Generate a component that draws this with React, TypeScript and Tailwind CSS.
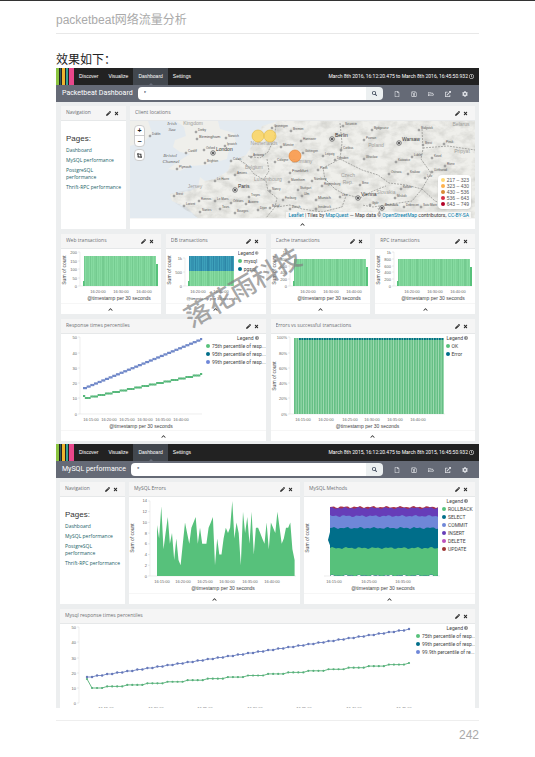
import type { ReactNode } from "react";
import {
  FaChevronUp,
  FaCog,
  FaCropAlt,
  FaExternalLinkAlt,
  FaPencilAlt,
  FaRegClock,
  FaRegFile,
  FaRegFolderOpen,
  FaRegSave,
  FaSearch,
  FaTimes,
} from "react-icons/fa";

type Tick = [number, string];

const GREEN = "#57c17b";
const TEAL = "#006e8a";
const BLUE = "#6f87d8";

function TopNav({ year }: { year: string }) {
  return (
    <nav className="flex h-[17px] items-center bg-[#222222] font-['Liberation_Sans',sans-serif] text-[5px] text-white">
      <div className="flex h-full w-[18px] gap-px bg-[#222222]">
        <span className="w-[3px] bg-[#8ac440]" />
        <span className="w-px bg-[#2f5f5b]" />
        <span className="w-[3px] bg-[#edb52e]" />
        <span className="w-[3px] bg-[#35a594]" />
        <span className="w-[5px] bg-[#e8478b]" />
      </div>
      <a href="#discover" className="px-[5px]">Discover</a>
      <a href="#visualize" className="px-[5px]">Visualize</a>
      <a href="#dashboard" className="relative flex h-full items-center bg-[#42474e] px-[5px]">
        Dashboard
        <span className="absolute bottom-0 left-1/2 size-0 -translate-x-1/2 border-x-2 border-b-2 border-x-transparent border-b-[#656a76]" />
      </a>
      <a href="#settings" className="px-[5px]">Settings</a>
      <button type="button" className="ml-auto mr-[5px] flex items-center gap-px whitespace-nowrap font-['Roboto',sans-serif]">
        March 8th {year}, 16:12:20.475 to March 8th {year}, 16:45:50.932
        <FaRegClock className="size-[5px]" />
      </button>
    </nav>
  );
}

function SearchBar({ title, id }: { title: string; id: string }) {
  const icon = "size-[6px]";
  return (
    <div className="flex h-[17px] items-center bg-[#656a76] pl-[6px] pr-[11px] text-white">
      <label htmlFor={id} className="whitespace-nowrap font-['Roboto',sans-serif] text-[7px]">
        {title}
      </label>
      <form className="ml-[5px] flex h-[13px] min-w-0 flex-1">
        <input
          id={id}
          defaultValue="*"
          className="min-w-0 flex-1 rounded-l-sm bg-white px-[6px] font-['Liberation_Sans',sans-serif] text-[6px] text-gray-700 outline-none"
        />
        <button type="button" aria-label="Search" className="flex w-[17px] items-center justify-center rounded-r-sm bg-[#ecf0f1] text-gray-700">
          <FaSearch className="size-[5px]" />
        </button>
      </form>
      <div className="ml-[11px] flex gap-[11px] text-[#dfe1e6]">
        <button type="button" aria-label="New"><FaRegFile className={icon} /></button>
        <button type="button" aria-label="Save"><FaRegSave className={icon} /></button>
        <button type="button" aria-label="Open"><FaRegFolderOpen className={icon} /></button>
        <button type="button" aria-label="Share"><FaExternalLinkAlt className={icon} /></button>
        <button type="button" aria-label="Options"><FaCog className={icon} /></button>
      </div>
    </div>
  );
}

function Panel({ title, children, footer = true }: { title: string; children: ReactNode; footer?: boolean }) {
  return (
    <section className="flex min-w-0 flex-col bg-white">
      <header className="flex h-[15px] items-center border-b border-[#e6e8e9] bg-[#f5f5f5] pl-[5px] pr-[7px] text-[#6d7074]">
        <h2 className="min-w-0 flex-1 truncate text-[5px]">{title}</h2>
        <button type="button" aria-label="Edit" className="text-[#222]"><FaPencilAlt className="size-[5px]" /></button>
        <button type="button" aria-label="Remove" className="ml-[3px] text-[#222]"><FaTimes className="size-[5px]" /></button>
      </header>
      {children}
      {footer && (
        <button type="button" aria-label="Toggle details" className="flex h-[11px] items-center justify-center border-t border-[#f6f6f6] text-[#333]">
          <FaChevronUp className="size-[5px]" />
        </button>
      )}
    </section>
  );
}

function Navigation() {
  const link = "text-[#1d5f68]";
  return (
    <Panel title="Navigation" footer={false}>
      <div className="px-[5px] pt-[13px] text-[5px] leading-[7px]">
        <h3 className="mb-[4px] text-[8px] leading-[9px] text-[#333] font-['Liberation_Sans',sans-serif]">Pages:</h3>
        <ul className="space-y-[3px]">
          <li><a href="#dashboard" className={link}>Dashboard</a></li>
          <li><a href="#mysql" className={link}>MySQL performance</a></li>
          <li><a href="#pgsql" className={link}>PostgreSQL performance</a></li>
          <li className="whitespace-nowrap"><a href="#thrift" className={link}>Thrift-RPC performance</a></li>
        </ul>
      </div>
    </Panel>
  );
}

function Legend({ items }: { items: [string, string][] }) {
  return (
    <div className="min-w-0 flex-1 overflow-hidden font-['Roboto',sans-serif] text-[5px] leading-[8px] text-[#444]">
      <p className="flex items-center justify-end gap-px pr-[7px]">
        Legend
        <svg viewBox="0 0 8 8" className="size-[4px]" fill="none" stroke="currentColor">
          <circle cx="4" cy="4" r="3.4" />
          <path d="M2.5 3.2 5.5 4 2.5 4.8Z" fill="currentColor" />
        </svg>
      </p>
      <ul>
        {items.map(([name, color]) => (
          <li key={name} className="flex items-center gap-[2px]">
            <svg viewBox="0 0 4 4" className="size-[4px] shrink-0"><circle cx="2" cy="2" r="2" fill={color} /></svg>
            <span className="whitespace-nowrap">{name}</span>
          </li>
        ))}
      </ul>
    </div>
  );
}

function Axes({ ys, xs, base, axisX, end, title, yTitle }: {
  ys: Tick[]; xs: Tick[]; base: number; axisX: number; end: number; title?: string; yTitle?: number;
}) {
  return (
    <g fontFamily="Liberation Sans, Arial, sans-serif" fontSize="4" fill="#666">
      <path d={`M${axisX} ${ys[0][0]}V${base}H${end}`} fill="none" stroke="#e3e3e3" strokeWidth="0.6" />
      {ys.map(([y, t]) => (
        <g key={t}>
          <path d={`M${axisX - 2} ${y}H${axisX}`} stroke="#ddd" strokeWidth="0.6" />
          <text x={axisX - 3} y={y + 1.5} textAnchor="end">{t}</text>
        </g>
      ))}
      {xs.map(([x, t]) => <text key={t} x={x} y={base + 6.5} textAnchor="middle">{t}</text>)}
      {title && (
        <text x={(axisX + end) / 2} y={base + 14} textAnchor="middle" fontSize="5" fill="#444">{title}</text>
      )}
      {yTitle !== undefined && (
        <text transform={`translate(5 ${yTitle}) rotate(-90)`} textAnchor="middle" fontSize="5" fill="#444">Sum of count</text>
      )}
    </g>
  );
}

const TIME = "@timestamp per 30 seconds";
const chart = "block shrink-0";
const pale = "#86dba1";
const mid = "#72c98e";

function Bars({ x0, x1, top, bottom, a, b }: { x0: number; x1: number; top: number; bottom: number; a: string; b: string }) {
  const n = Math.floor((x1 - x0) / 2);
  return (
    <>
      <rect x={x0} y={top} width={x1 - x0} height={bottom - top} fill={a} />
      {Array.from({ length: n }, (_, i) => (
        <rect key={i} x={x0 + i * 2} y={top} width={i % 4 === 1 ? 2 : 1} height={bottom - top} fill={b} opacity={i % 3 === 0 ? 0.9 : 0.5} />
      ))}
    </>
  );
}

const thousand: Tick[] = [[4, "1k"], [11, "800"], [18, "600"], [24, "400"], [31, "200"], [38, "0"]];
const smallTimes: Tick[] = [[37, "16:20:00"], [60, "16:30:00"], [83, "16:40:00"]];

function SmallBars({ ys, top }: { ys: Tick[]; top: number }) {
  return (
    <svg viewBox="0 1 99 54" className="block h-[54px] w-full" preserveAspectRatio="xMinYMin meet">
      <Axes ys={ys} xs={smallTimes} base={38} axisX={19} end={97} title={TIME} yTitle={22} />
      <Bars x0={23} x1={95} top={top} bottom={38} a={pale} b={mid} />
      <rect x="22" y="33" width="1.5" height="5" fill={GREEN} />
      <rect x="95" y={top + 8} width="2" height={30 - top} fill={GREEN} />
    </svg>
  );
}

function DbBars() {
  return (
    <div className="flex">
      <svg viewBox="0 1 72 54" className={`${chart} h-[54px] w-[72px]`}>
        <Axes ys={[[10, "1k"], [24, "500"], [38, "0"]]} xs={[[32, "16:20:00"], [55, "16:40:00"]]} base={38} axisX={19} end={68} yTitle={22} />
        <text x="46" y="52" textAnchor="middle" fontSize="4" fill="#444" fontFamily="Liberation Sans, Arial, sans-serif">{TIME}</text>
        <Bars x0={23} x1={68} top={8} bottom={23} a="#3da0ba" b="#2b84a5" />
        <Bars x0={23} x1={68} top={23} bottom={38} a={pale} b={mid} />
        <rect x="22" y="33" width="1.5" height="5" fill={GREEN} />
      </svg>
      <Legend items={[["mysql", GREEN], ["pgsql", TEAL]]} />
    </div>
  );
}

const POINTS = 65;
function trend(i: number, from: number, to: number, step: number) {
  const k = Math.floor(i / step) * step;
  return from + ((to - from) * k) / (POINTS - 1);
}
function seriesPoints(x0: number, x1: number, from: number, to: number, step: number, first?: number) {
  return Array.from({ length: POINTS }, (_, i): [number, number] => [
    x0 + ((x1 - x0) * i) / (POINTS - 1),
    i === 0 && first !== undefined ? first : trend(i, from, to, step),
  ]);
}
const join = (p: [number, number][]) => p.map(([x, y]) => `${x.toFixed(1)},${y.toFixed(1)}`).join(" ");

function ResponseChart() {
  const green = seriesPoints(23, 140, 65, 41, 4, 63);
  const blue = seriesPoints(23, 140, 55, 6, 2);
  return (
    <div className="flex">
      <svg viewBox="0 1 145 96" className={`${chart} h-[96px] w-[145px]`}>
        <Axes
          ys={[[4, "50"], [20, "40"], [35, "30"], [50, "20"], [65, "10"], [81, "0"]]}
          xs={[[30, "16:15:00"], [48, "16:20:00"], [66, "16:25:00"], [84, "16:30:00"], [102, "16:35:00"], [120, "16:40:00"]]}
          base={81} axisX={19} end={141} title={TIME}
        />
        {green.map(([x, y]) => <rect key={x} x={x - 1} y={y - 1} width="2.2" height="2" fill="#57b87b" />)}
        {blue.map(([x, y]) => <rect key={x} x={x - 1} y={y - 1} width="2.2" height="2.2" fill="#6f87c8" />)}
      </svg>
      <Legend items={[["75th percentile of resp...", GREEN], ["95th percentile of resp...", TEAL], ["99th percentile of resp...", BLUE]]} />
    </div>
  );
}

function ErrorsRatioChart() {
  return (
    <div className="flex">
      <svg viewBox="0 1 175 96" className={`${chart} h-[96px] w-[175px]`}>
        <Axes
          ys={[[4, "100%"], [20, "80%"], [35, "60%"], [50, "40%"], [65, "20%"], [81, "0%"]]}
          xs={[[32, "16:15:00"], [55, "16:20:00"], [79, "16:25:00"], [101, "16:30:00"], [124, "16:35:00"], [147, "16:40:00"]]}
          base={81} axisX={19} end={174} title={TIME} yTitle={43}
        />
        <rect x="23" y="5" width="150" height="76" fill="#a9e0ba" />
        {Array.from({ length: 60 }, (_, i) => (
          <g key={i}>
            <rect x={23 + i * 2.5} y="5" width="1.7" height="76" fill="#66bf85" />
            {i > 1 && <rect x={23 + i * 2.5} y="5" width="1.8" height="2" fill={TEAL} />}
          </g>
        ))}
      </svg>
      <Legend items={[["OK", GREEN], ["Error", TEAL]]} />
    </div>
  );
}

const ERRORS = [
  9.5, 7, 13, 5, 8, 11, 6, 8, 3, 7, 3, 2, 6, 10, 8, 6, 9, 10, 11, 6, 9, 6, 6, 6, 9, 10, 11, 2, 7, 4, 4, 7, 9, 8, 9, 14,
  7, 10, 8, 2, 12, 8, 11, 6, 12, 4, 9, 9, 8, 7, 6, 10, 5, 10, 9, 8, 12, 9, 6, 7, 9, 9, 10, 5, 3,
];

function MysqlErrors() {
  const pts = ERRORS.map((v, i): [number, number] => [28 + i * 2.15, 79 - v * 5.36]);
  return (
    <svg viewBox="0 0 170 96" className="block h-[96px] w-full" preserveAspectRatio="xMinYMin meet">
      <Axes
        ys={[14, 12, 10, 8, 6, 4, 2, 0].map((v): Tick => [79 - v * 5.36, String(v)])}
        xs={[[33, "16:15:00"], [54, "16:20:00"], [76, "16:25:00"], [98, "16:30:00"], [121, "16:35:00"], [143, "16:40:00"]]}
        base={79} axisX={21} end={167} title={TIME} yTitle={41}
      />
      <polygon points={`28,79 ${join(pts)} 165.6,79`} fill={GREEN} />
    </svg>
  );
}

function wave(y: number, seed: number): [number, number][] {
  return Array.from({ length: 55 }, (_, i) => [26 + i * 2, y + Math.sin(i * 1.9 + seed) * 0.6 + Math.cos(i * 0.9 + seed * 3) * 0.5]);
}

function MysqlMethods() {
  const layers: [number, string][] = [[10, "#a83248"], [11, "#663db8"], [19, BLUE], [31, TEAL], [51, GREEN]];
  const floor = join(wave(78.5, 9).map(([x, y]): [number, number] => [x, Math.min(y, 79)]).reverse());
  return (
    <div className="flex">
      <svg viewBox="0 0 138 96" className={`${chart} h-[96px] w-[138px]`}>
        <Axes ys={[[79, ""]]} xs={[[30, "16:15:00"], [65, "16:25:00"], [99, "16:35:00"]]} base={79} axisX={22} end={136} title={TIME} yTitle={41} />
        {layers.map(([y, color], i) => (
          <polygon key={color} points={`${join(wave(y, i * 2 + 1))} ${floor}`} fill={color} />
        ))}
        <path d="M27 31 24 43 27 51Z" fill={TEAL} />
      </svg>
      <Legend items={[["ROLLBACK", GREEN], ["SELECT", TEAL], ["COMMIT", BLUE], ["INSERT", "#663db8"], ["DELETE", "#bc52bc"], ["UPDATE", "#9e3533"]]} />
    </div>
  );
}

function MysqlResponse() {
  const green = seriesPoints(27, 349, 65, 40, 4, 56);
  const blue = seriesPoints(27, 349, 54, 6, 2);
  return (
    <div className="flex">
      <svg viewBox="0 1 356 84" className={`${chart} h-[84px] w-[356px]`}>
        <Axes
          ys={[[4, "50"], [19, "40"], [35, "30"], [50, "20"], [65, "10"], [80, "0"]]}
          xs={[[46, "16:15:00"], [96, "16:20:00"], [145, "16:25:00"], [195, "16:30:00"], [244, "16:35:00"], [294, "16:40:00"], [344, "16:45:00"]]}
          base={80} axisX={19} end={19}
        />
        <polyline points={join(green)} fill="none" stroke="#66b984" />
        <polyline points={join(blue)} fill="none" stroke="#7c90cc" />
        {green.map(([x, y]) => <circle key={x} cx={x} cy={y} r="1.1" fill="#57b07b" />)}
        {blue.map(([x, y]) => <circle key={x} cx={x} cy={y} r="1.2" fill="#6678b8" />)}
      </svg>
      <Legend items={[["75th percentile of resp...", GREEN], ["99th percentile of resp...", TEAL], ["99.9th percentile of re...", BLUE]]} />
    </div>
  );
}

const cities: [number, number, string][] = [
  [83, 32, "London"], [105, 69, "Paris"], [202, 18, "Berlin"], [269, 22, "Warsaw"], [228, 77, "Vienna"], [252, 87, "Bratislava"],
];
const towns: [number, number, string][] = [
  [67, 18, "Birmingham"], [160, 52, "Frankfurt"], [186, 79, "Munich"], [66, 11, "Derby"], [20, 15, "Dublin"], [96, 17, "Norwich"],
  [95, 25, "Ipswich"], [56, 32, "Cardiff"], [74, 29, "Oxford"], [75, 42, "Brighton"], [47, 48, "Plymouth"], [101, 40, "Calais"],
  [121, 36, "Antwerp"], [85, 60, "Le Havre"], [105, 54, "Amiens"], [44, 75, "Brest"], [54, 85, "Lorient"], [69, 80, "Rennes"],
  [85, 80, "Le Mans"], [70, 91, "Nantes"], [90, 88, "Tours"], [101, 82, "Orléans"], [116, 83, "Auxerre"], [105, 92, "Bourges"],
  [119, 76, "Troyes"], [128, 89, "Dijon"], [142, 7, "Groningen"], [161, 10, "Bremen"], [171, 20, "Hannover"], [151, 26, "Münster"],
  [173, 32, "Göttingen"], [145, 41, "Cologne"], [193, 35, "Leipzig"], [211, 29, "Cottbus"], [205, 39, "Dresden"], [213, 5, "Szczecin"],
  [242, 9, "Bydgoszcz"], [234, 19, "Poznan"], [234, 38, "Wroclaw"], [266, 41, "Katowice"], [259, 53, "Ostrava"],
  [278, 53, "Krakow"], [295, 57, "Lviv"], [293, 24, "Brest"], [282, 36, "Lublin"], [302, 37, "Kovel"], [314, 23, "Pinsk"],
  [315, 45, "Rivne"], [302, 51, "Uzhhorod"], [159, 61, "Mannheim"], [182, 60, "Nürnberg"], [192, 65, "Regensburg"], [168, 69, "Stuttgart"],
  [140, 70, "Nancy"], [153, 79, "Freiburg"], [160, 88, "Zürich"], [140, 87, "Basel"], [210, 76, "Linz"], [230, 64, "Brno"],
  [240, 84, "Győr"], [274, 86, "Debrecen"], [271, 68, "Košice"], [291, 86, "Satu Mare"], [186, 88, "Innsbruck"], [172, 75, "Ulm"],
  [289, 9, "Bialystok"], [265, 77, "Miskolc"], [188, 49, "Plzeň"],
];
const regions: [number, number, string][] = [
  [63, 4, "Kingdom"], [65, 67, "Jersey"], [134, 24, "Netherlands"], [124, 48, "Belgium"], [246, 26, "Poland"], [172, 42, "Germany"],
  [138, 60, "Luxembourg"], [218, 56, "Czech"], [218, 63, "Rep."], [256, 73, "Slovakia"], [331, 5, "Belarus"], [332, 32, "Pripyat"],
];
const seas: [number, number, string][] = [[42, 4, "Irish"], [42, 10, "Sea"], [40, 36, "Bristol"], [41, 42, "Channel"]];

const clientRanges: [string, string][] = [
  ["217 – 323", "#fed976"], ["323 – 430", "#feb24c"], ["430 – 536", "#d98b35"], ["536 – 643", "#d62f45"], ["643 – 749", "#b10026"],
];

function ClientMap() {
  const control = "flex h-[10px] w-[9px] items-center justify-center text-[#222]";
  const link = "text-[#0078a8]";
  return (
    <div className="relative h-[97px] overflow-hidden font-['Liberation_Sans',sans-serif]">
      <svg viewBox="0 0 345 97" className="block size-full" preserveAspectRatio="xMinYMin slice">
        <defs>
          <filter id="relief" x="0" y="0" width="100%" height="100%">
            <feTurbulence type="fractalNoise" baseFrequency="0.09 0.13" numOctaves="4" seed="8" />
            <feColorMatrix values="0 0 0 0 0.45  0 0 0 0 0.45  0 0 0 0 0.42  0.9 0 0 0 -0.33" />
            <feComposite in2="SourceGraphic" operator="in" />
          </filter>
        </defs>
        <rect width="345" height="97" fill="#e3eaf0" />
        <g fill="#efefeb">
          <path d="M0 0H18L22 12 15 20 0 25Z" />
          <path d="M46 0H88L90 8 104 12 106 22 98 32 97 38 75 44 60 45 50 50 38 48 52 38 60 33 50 31 43 26 45 19 56 15 54 6Z" />
          <path d="M345 0H148L132 5 125 20 116 34 101 40 98 50 85 58 75 60 70 56 68 66 60 70 40 73 42 80 56 86 68 97H345Z" />
        </g>
        <path d="M345 0H148L132 5 125 20 116 34 101 40 98 50 85 58 75 60 68 66 40 73 42 80 68 97H345Z" filter="url(#relief)" />
        <g fill="none" stroke="#8e8e8b" strokeWidth="0.7" strokeDasharray="2 1">
          <path d="M108 38 117 44 124 53 136 60 138 70 147 77 145 86 136 97" />
          <path d="M118 35 130 37 138 31 144 18 146 4" />
          <path d="M137 38 139 50 134 58M147 86 160 84 172 88 192 91 212 86 216 75" />
          <path d="M210 2 212 22 210 38 193 47 195 58 205 68 214 73 230 77 243 70 256 65" />
          <path d="M210 38 220 43 232 49 248 54 259 62 276 64 292 68M292 8 293 28 291 38 301 52 292 68 282 80 262 83 243 86 232 84" />
          <path d="M293 27 318 25 345 29M292 68 305 80 320 86M248 87 252 97" />
        </g>
        <g fontSize="5" fill="#a0a09c" textAnchor="middle">
          {regions.map(([x, y, t]) => <text key={t} x={x} y={y}>{t}</text>)}
        </g>
        <g fontSize="5" fill="#666" textAnchor="middle" fontFamily="Liberation Serif, serif" fontStyle="italic">
          {seas.map(([x, y, t]) => <text key={t} x={x} y={y}>{t}</text>)}
        </g>
        <g fontSize="3" fill="#555">
          {towns.map(([x, y, t]) => (
            <g key={`${t}${x}`}>
              <circle cx={x} cy={y} r="0.9" fill="#fff" stroke="#555" strokeWidth="0.6" />
              <text x={x + 2} y={y - 1} fontSize={t === "Birmingham" || t === "Frankfurt" || t === "Munich" ? 4 : 3}>{t}</text>
            </g>
          ))}
        </g>
        <g fontSize="5" fill="#333">
          {cities.map(([x, y, t]) => (
            <g key={t}>
              <circle cx={x} cy={y} r="2.3" fill="#ddd" stroke="#555" strokeWidth="0.7" />
              <circle cx={x} cy={y} r="1.1" fill="#444" />
              <text x={x + 3} y={y - 2} fontSize={t === "Bratislava" ? 3 : 5}>{t}</text>
            </g>
          ))}
        </g>
        <g strokeWidth="0.6">
          <circle cx="128" cy="15" r="6" fill="#fbd55f" fillOpacity="0.85" stroke="#e3b83f" />
          <circle cx="140" cy="15" r="6" fill="#fbd55f" fillOpacity="0.85" stroke="#e3b83f" />
          <circle cx="165" cy="35" r="6" fill="#fb9a4b" fillOpacity="0.9" stroke="#e08232" />
        </g>
      </svg>
      <div className="absolute left-[4px] top-[4px] text-[7px] font-bold leading-none">
        <div className="divide-y divide-[#ccc] rounded-sm border border-[#ccc] bg-white">
          <button type="button" aria-label="Zoom in" className={control}>+</button>
          <button type="button" aria-label="Zoom out" className={control}>−</button>
        </div>
        <div className="mt-[2px] rounded-sm border border-[#ccc] bg-white">
          <button type="button" aria-label="Fit data bounds" className={control}><FaCropAlt className="size-[5px]" /></button>
        </div>
      </div>
      <ul className="absolute bottom-[9px] right-[4px] rounded-sm bg-white p-[2px] pl-[3px] text-[5px] leading-[6px] text-[#555] shadow-sm">
        {clientRanges.map(([label, color]) => (
          <li key={label} className="flex items-center gap-[2px]">
            <svg viewBox="0 0 4 4" className="size-[4px]"><circle cx="2" cy="2" r="2" fill={color} /></svg>
            {label}
          </li>
        ))}
      </ul>
      <p className="absolute bottom-0 right-[4px] whitespace-nowrap bg-white/70 px-[2px] font-['Roboto',sans-serif] text-[5px] leading-[6px] text-[#333]">
        <a href="#leaflet" className={link}>Leaflet</a> | Tiles by <a href="#mapquest" className={link}>MapQuest</a> — Map data ©{" "}
        <a href="#osm" className={link}>OpenStreetMap</a> contributors, <a href="#license" className={link}>CC-BY-SA</a>
      </p>
    </div>
  );
}

export default function App() {
  return (
    <div className="relative border-t border-[#333] bg-white px-14 font-['Open_Sans',sans-serif]">
      <header className="flex h-[33px] items-end border-b border-[#e8e8e8] pb-[4px] font-['Liberation_Sans','Noto_Sans_CJK_SC',sans-serif] text-[12px] leading-[18px] text-[#aaa]">
        packetbeat网络流量分析
      </header>
      <main>
        <p className="mt-[16px] h-[18px] font-['Noto_Sans_CJK_SC',sans-serif] text-[12px] leading-[18px] text-[#222]">效果如下：</p>

        <div className="relative">
          <TopNav year="2016" />
          <SearchBar title="Packetbeat Dashboard" id="query-packetbeat" />
          <div className="space-y-[5px] bg-[#eceeef] pb-[3px] pl-[5px] pr-[4px] pt-[4px]">
            <div className="grid grid-cols-[65px_minmax(0,1fr)] gap-[4px]">
              <Navigation />
              <Panel title="Client locations"><ClientMap /></Panel>
            </div>
            <div className="grid grid-cols-4 gap-[5px]">
              <Panel title="Web transactions">
                <SmallBars ys={[[4, "200"], [13, "150"], [21, "100"], [30, "50"], [38, "0"]]} top={8} />
              </Panel>
              <Panel title="DB transactions"><DbBars /></Panel>
              <Panel title="Cache transactions"><SmallBars ys={thousand} top={11} /></Panel>
              <Panel title="RPC transactions"><SmallBars ys={thousand} top={11} /></Panel>
            </div>
            <div className="grid grid-cols-2 gap-[5px]">
              <Panel title="Response times percentiles"><ResponseChart /></Panel>
              <Panel title="Errors vs successful transactions"><ErrorsRatioChart /></Panel>
            </div>
          </div>
          <p className="pointer-events-none absolute left-[186px] top-[218px] -translate-x-1/2 -translate-y-1/2 -rotate-30 whitespace-nowrap font-['Noto_Sans_CJK_SC',sans-serif] text-[26px] font-medium leading-none text-[#808080]/70">
            落花雨科技
          </p>
        </div>

        <div>
          <TopNav year="2015" />
          <SearchBar title="MySQL performance" id="query-mysql" />
          <div className="space-y-[5px] bg-[#eceeef] pl-[4px] pr-[4px] pt-[4px]">
            <div className="grid grid-cols-[65px_minmax(0,1fr)_minmax(0,1fr)] gap-[4px]">
              <Navigation />
              <Panel title="MySQL Errors"><MysqlErrors /></Panel>
              <Panel title="MySQL Methods"><MysqlMethods /></Panel>
            </div>
            <Panel title="Mysql response times percentiles" footer={false}><MysqlResponse /></Panel>
          </div>
        </div>
      </main>
      <footer className="mt-[12px] border-t border-[#eee] pt-[5px] text-right font-['Liberation_Sans',sans-serif] text-[12px] leading-[18px] text-[#aaa]">
        242
      </footer>
    </div>
  );
}
